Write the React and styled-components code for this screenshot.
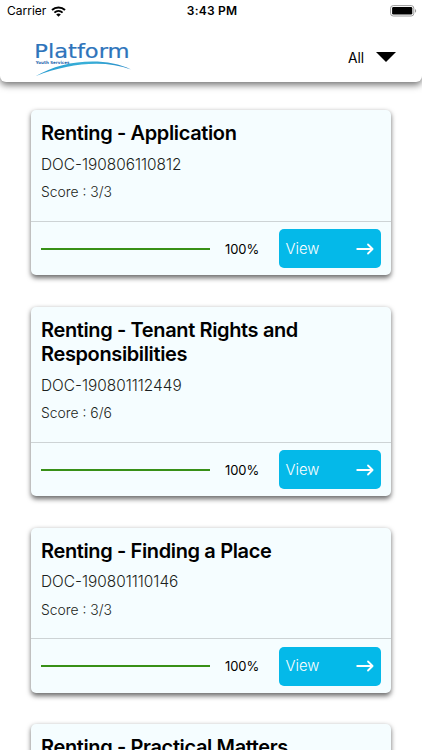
import React from "react";
import styled, { createGlobalStyle } from "styled-components";

const GlobalStyle = createGlobalStyle`
  * {
    box-sizing: border-box;
  }

  body {
    margin: 0;
    background: #ffffff;
    color: #000000;
    font-family: Inter, "Liberation Sans", sans-serif;
  }
`;

const Screen = styled.div`
  width: 100%;
  height: 750px;
  overflow: hidden;
  background: #ffffff;
`;

const Header = styled.header`
  height: 82px;
  background: #ffffff;
  border-radius: 0 0 6px 6px;
  box-shadow: 0 3px 7px rgba(0, 0, 0, 0.55);
`;

const StatusBar = styled.div`
  display: grid;
  grid-template-columns: 1fr auto 1fr;
  align-items: center;
  height: 22px;
  padding: 0 5px 0 7px;
  font-size: 12px;
  line-height: 22px;
`;

const Carrier = styled.div`
  display: flex;
  align-items: center;
  gap: 5px;
  letter-spacing: 0;
`;

const Clock = styled.div`
  font-weight: 600;
  letter-spacing: 0.2px;
`;

const BatterySlot = styled.div`
  display: flex;
  justify-content: flex-end;
`;

const NavBar = styled.div`
  display: flex;
  align-items: center;
  justify-content: space-between;
  height: 60px;
  padding: 10px 26px 0 33px;
`;

const LogoSvg = styled.svg`
  display: block;
  margin-top: 1px;
`;

const Filter = styled.div`
  display: flex;
  align-items: center;
  gap: 12px;
  font-size: 13.8px;
  line-height: 20px;
  letter-spacing: -0.1px;
`;

const FilterLabel = styled.span`
  padding-top: 1px;
`;

const CardList = styled.main`
  display: flex;
  flex-direction: column;
  gap: 31.5px;
  padding: 28.3px 31px 0;
`;

const Card = styled.article`
  flex: none;
  background: #f5fdff;
  border-radius: 5px;
  box-shadow: 0 2.5px 5.5px rgba(0, 0, 0, 0.58);
`;

const CardBody = styled.div`
  height: ${({ $tall }) => ($tall ? "136px" : "111.8px")};
  padding: 10.9px 10px 0;
  border-bottom: 1px solid #cdd3d5;
`;

const Title = styled.h2`
  margin: 0;
  font-size: 20px;
  font-weight: 600;
  line-height: 24.2px;
  letter-spacing: -0.37px;
`;

const Meta = styled.p`
  margin: ${({ $top }) => $top}px 0 0;
  color: #1c1f20;
  font-size: ${({ $size }) => $size}px;
  font-weight: 300;
  line-height: 20px;
`;

const CardFooter = styled.div`
  display: flex;
  align-items: center;
  height: 53.3px;
  padding: 0 10px;
`;

const Track = styled.div`
  width: 169px;
  height: 2px;
  background: #b5e89c;
`;

const Progress = styled.div`
  height: 100%;
  background: #389017;
`;

const Percent = styled.span`
  width: 69px;
  padding-left: 15px;
  font-size: 13px;
  letter-spacing: -0.1px;
`;

const ViewButton = styled.button`
  display: flex;
  align-items: center;
  justify-content: space-between;
  width: 102px;
  height: 39px;
  padding: 0 7px 0 6.5px;
  border: 0;
  border-radius: 5px;
  background: #04b9e9;
  color: #ffffff;
  font-family: inherit;
  font-size: 14.8px;
  font-weight: 350;
`;

const documents = [
  { title: "Renting - Application", code: "DOC-190806110812", score: "3/3", percent: 100 },
  { title: "Renting - Tenant Rights and Responsibilities", code: "DOC-190801112449", score: "6/6", percent: 100, tall: true },
  { title: "Renting - Finding a Place", code: "DOC-190801110146", score: "3/3", percent: 100 },
  { title: "Renting - Practical Matters" },
];

const WifiIcon = () => (
  <svg width="15" height="11" viewBox="0 0 15 11" fill="none" stroke="#000">
    <path d="M1 4.1C4.6.7 10.4.7 14 4.1" strokeWidth="2" />
    <path d="M3.4 6.6c2.4-2.1 5.8-2.1 8.2 0" strokeWidth="1.9" />
    <path d="M5.2 8.4c1.4-1.1 3.2-1.1 4.6 0L7.5 10.8z" fill="#000" stroke="none" />
  </svg>
);

const BatteryIcon = () => (
  <svg width="27" height="12" viewBox="0 0 27 12">
    <rect x="0.6" y="0.6" width="23.2" height="10.4" rx="2.6" fill="#fff" stroke="#9a9a9a" />
    <rect x="2.1" y="2" width="20.2" height="7.6" rx="1.3" fill="#000" />
    <path d="M25 4v3.8c1.6-.7 1.6-3.1 0-3.8z" fill="#9a9a9a" />
  </svg>
);

const Logo = () => (
  <LogoSvg width="100" height="38" viewBox="0 0 100 38">
    <defs>
      <linearGradient id="swoosh" x1="0" x2="1">
        <stop offset="0" stopColor="#269bd0" />
        <stop offset="0.55" stopColor="#39b0d8" />
        <stop offset="1" stopColor="#2688c7" />
      </linearGradient>
    </defs>
    <text x="1.3" y="18.8" textLength="95.3" lengthAdjust="spacingAndGlyphs" fill="#2e74bb" stroke="#2e74bb" strokeWidth="0.2" fontFamily="DejaVu Sans, sans-serif" fontSize="18.8">
      Platform
    </text>
    <text x="2.8" y="24.8" textLength="33.5" lengthAdjust="spacingAndGlyphs" fill="#2565ad" fontFamily="DejaVu Sans, sans-serif" fontSize="4.2" fontWeight="700">
      Youth Services
    </text>
    <path d="M2.5 37.2C30 20.5 72 17.5 98 30.4C72 20.8 36 23.8 2.5 37.2Z" fill="url(#swoosh)" />
  </LogoSvg>
);

const CaretIcon = () => (
  <svg width="20" height="10" viewBox="0 0 20 10">
    <path d="M0 0h20L10 10z" />
  </svg>
);

const ArrowIcon = () => (
  <svg width="18" height="12" viewBox="0 0 18 12" fill="none" stroke="#fff" strokeWidth="1.8" strokeLinecap="round" strokeLinejoin="round">
    <path d="M1.2 6h15.4M12 1.5L16.6 6L12 10.5" />
  </svg>
);

const DocumentCard = ({ title, code, score, percent, tall }) => (
  <Card>
    <CardBody $tall={tall}>
      <Title>{title}</Title>
      {code && <Meta $top={9.5} $size={15.4}>{code}</Meta>}
      {score && <Meta $top={7.5} $size={13.9}>Score : {score}</Meta>}
    </CardBody>
    {percent !== undefined && (
      <CardFooter>
        <Track>
          <Progress style={{ width: `${percent}%` }} />
        </Track>
        <Percent>{percent}%</Percent>
        <ViewButton>
          View
          <ArrowIcon />
        </ViewButton>
      </CardFooter>
    )}
  </Card>
);

const App = () => {
  return (
    <>
      <GlobalStyle />
      <Screen>
        <Header>
          <StatusBar>
            <Carrier>
              Carrier
              <WifiIcon />
            </Carrier>
            <Clock>3:43 PM</Clock>
            <BatterySlot>
              <BatteryIcon />
            </BatterySlot>
          </StatusBar>
          <NavBar>
            <Logo />
            <Filter>
              <FilterLabel>All</FilterLabel>
              <CaretIcon />
            </Filter>
          </NavBar>
        </Header>
        <CardList>
          {documents.map((item) => (
            <DocumentCard key={item.title} {...item} />
          ))}
        </CardList>
      </Screen>
    </>
  );
};

export default App;
